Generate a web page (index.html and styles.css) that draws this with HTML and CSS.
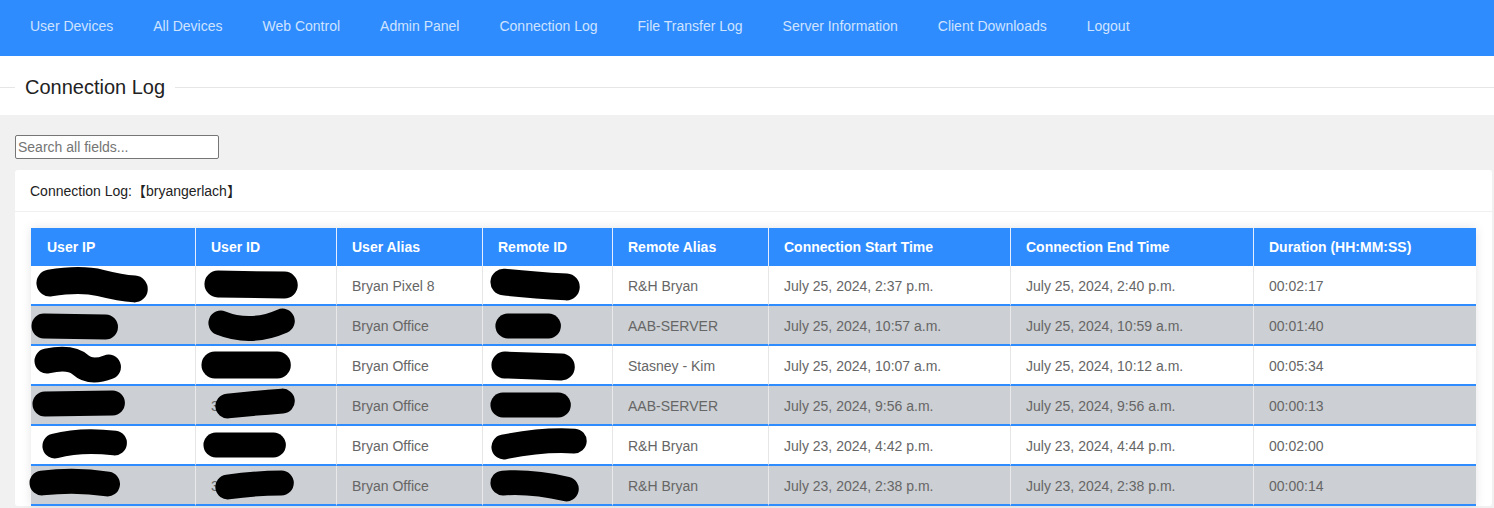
FILE: index.html
```html
<!DOCTYPE html>
<html lang="en">
<head>
<meta charset="utf-8">
<title>Connection Log</title>
<link rel="stylesheet" href="styles.css">
</head>
<body>
<nav class="topnav">
  <a href="#">User Devices</a>
  <a href="#">All Devices</a>
  <a href="#">Web Control</a>
  <a href="#">Admin Panel</a>
  <a href="#">Connection Log</a>
  <a href="#">File Transfer Log</a>
  <a href="#">Server Information</a>
  <a href="#">Client Downloads</a>
  <a href="#">Logout</a>
</nav>
<header class="page-title">
  <span class="rule rule-start"></span>
  <h1>Connection Log</h1>
  <span class="rule rule-fill"></span>
</header>
<main class="content">
  <input class="search" type="text" placeholder="Search all fields...">
  <section class="card">
    <div class="card-header">Connection Log:【bryangerlach】</div>
    <div class="card-body">
      <table class="log">
        <colgroup>
          <col class="c-ip"><col class="c-uid"><col class="c-ualias"><col class="c-rid"><col class="c-ralias"><col class="c-start"><col class="c-end"><col class="c-dur">
        </colgroup>
        <thead>
          <tr><th>User IP</th><th>User ID</th><th>User Alias</th><th>Remote ID</th><th>Remote Alias</th><th>Connection Start Time</th><th>Connection End Time</th><th>Duration (HH:MM:SS)</th></tr>
        </thead>
        <tbody>
          <tr>
            <td class="red"><svg class="blot" viewBox="0 0 165 40"><path d="M19 17 Q50 12 70 17 T104 23"/></svg></td>
            <td class="red"><svg class="blot" viewBox="0 0 141 40"><path d="M22 18 L89 19"/></svg></td>
            <td>Bryan Pixel 8</td>
            <td class="red"><svg class="blot" viewBox="0 0 130 40"><path d="M21 16 Q50 19 84 21"/></svg></td>
            <td>R&amp;H Bryan</td><td>July 25, 2024, 2:37 p.m.</td><td>July 25, 2024, 2:40 p.m.</td><td>00:02:17</td>
          </tr>
          <tr>
            <td class="red"><svg class="blot thin" viewBox="0 0 165 40"><path d="M13 20 L75 21"/></svg></td>
            <td class="red"><svg class="blot thin" viewBox="0 0 141 40"><path d="M25 17 Q55 29 87 15"/></svg></td>
            <td>Bryan Office</td>
            <td class="red"><svg class="blot thin" viewBox="0 0 130 40"><path d="M25 20 L66 20"/></svg></td>
            <td>AAB-SERVER</td><td>July 25, 2024, 10:57 a.m.</td><td>July 25, 2024, 10:59 a.m.</td><td>00:01:40</td>
          </tr>
          <tr>
            <td class="red"><svg class="blot thin" viewBox="0 0 165 40"><path d="M16 15 Q40 10 50 19 T78 21"/></svg></td>
            <td class="red"><svg class="blot" viewBox="0 0 141 40"><path d="M19 19 L82 19"/></svg></td>
            <td>Bryan Office</td>
            <td class="red"><svg class="blot" viewBox="0 0 130 40"><path d="M22 19 L79 21"/></svg></td>
            <td>Stasney - Kim</td><td>July 25, 2024, 10:07 a.m.</td><td>July 25, 2024, 10:12 a.m.</td><td>00:05:34</td>
          </tr>
          <tr>
            <td class="red"><svg class="blot thin" viewBox="0 0 165 40"><path d="M14 18 L82 17"/></svg></td>
            <td class="red">3<svg class="blot thin" viewBox="0 0 141 40"><path d="M32 20 Q60 17 87 15"/></svg></td>
            <td>Bryan Office</td>
            <td class="red"><svg class="blot thin" viewBox="0 0 130 40"><path d="M20 19 L76 19"/></svg></td>
            <td>AAB-SERVER</td><td>July 25, 2024, 9:56 a.m.</td><td>July 25, 2024, 9:56 a.m.</td><td>00:00:13</td>
          </tr>
          <tr>
            <td class="red"><svg class="blot thin" viewBox="0 0 165 40"><path d="M24 20 Q50 13 84 17"/></svg></td>
            <td class="red"><svg class="blot thin" viewBox="0 0 141 40"><path d="M20 19 L78 19"/></svg></td>
            <td>Bryan Office</td>
            <td class="red"><svg class="blot thin" viewBox="0 0 130 40"><path d="M21 21 Q60 13 92 15"/></svg></td>
            <td>R&amp;H Bryan</td><td>July 23, 2024, 4:42 p.m.</td><td>July 23, 2024, 4:44 p.m.</td><td>00:02:00</td>
          </tr>
          <tr>
            <td class="red"><svg class="blot thin" viewBox="0 0 165 40"><path d="M11 17 Q45 13 77 18"/></svg></td>
            <td class="red">3<svg class="blot thin" viewBox="0 0 141 40"><path d="M32 21 Q60 17 86 17"/></svg></td>
            <td>Bryan Office</td>
            <td class="red"><svg class="blot thin" viewBox="0 0 130 40"><path d="M20 17 Q50 15 84 23"/></svg></td>
            <td>R&amp;H Bryan</td><td>July 23, 2024, 2:38 p.m.</td><td>July 23, 2024, 2:38 p.m.</td><td>00:00:14</td>
          </tr>
        </tbody>
      </table>
    </div>
  </section>
</main>
</body>
</html>
```
FILE: styles.css
```css
* { box-sizing: border-box; }

html, body {
  margin: 0;
  padding: 0;
  background: #f1f1f1;
  font-family: "Liberation Sans", Arial, "Noto Sans CJK SC", sans-serif;
  font-size: 14px;
  overflow: hidden;
}

.topnav {
  height: 56px;
  background: #2e8cff;
  display: flex;
  align-items: center;
  padding-left: 10px;
}

.topnav a {
  color: #cfe3ff;
  text-decoration: none;
  font-size: 14px;
  padding: 0 20px;
  line-height: 16px;
  position: relative;
  top: -2px;
}

.page-title {
  height: 59px;
  background: #fff;
  display: flex;
  align-items: center;
  padding-top: 3px;
}

.page-title h1 {
  margin: 0;
  padding: 0 10px;
  font-size: 20px;
  font-weight: normal;
  color: #222;
  line-height: 24px;
}

.rule {
  height: 1px;
  background: #e6e6e6;
  margin-top: 0;
}

.rule-start { width: 15px; }
.rule-fill { flex: 1; }

.content {
  padding: 20px 2px 20px 15px;
}

.search {
  display: block;
  width: 204px;
  height: 24px;
  border: 1px solid #767676;
  border-radius: 2px;
  padding: 1px 2px;
  font-family: inherit;
  font-size: 14px;
  color: #333;
  background: #fff;
  margin: 0 0 11px;
}

.search::placeholder { color: #757575; }

.card {
  background: #fff;
  border-radius: 3px;
}

.card-header {
  padding: 13px 15px 11px;
  line-height: 17px;
  color: #222;
  border-bottom: 1px solid #f0f0f0;
}

.card-body {
  padding: 16px 16px 0;
}

.log {
  table-layout: fixed;
  width: 1445px;
  border-collapse: separate;
  border-spacing: 0;
  box-shadow: 0 0 10px rgba(0, 0, 0, 0.1);
}

.c-ip { width: 165px; }
.c-uid { width: 141px; }
.c-ualias { width: 146px; }
.c-rid { width: 130px; }
.c-ralias { width: 156px; }
.c-start { width: 242px; }
.c-end { width: 243px; }
.c-dur { width: 222px; }

.log th {
  background: #2e8cff;
  color: #fff;
  font-weight: bold;
  text-align: left;
  height: 38px;
  padding: 0 15px;
  border-right: 1px solid #e4eefc;
  white-space: nowrap;
}

.log th:first-child { padding-left: 16px; }
.log th:last-child { border-right: none; }

.log td {
  height: 40px;
  padding: 2px 15px 0;
  color: #666;
  border-right: 1px solid #e6e6e6;
  border-bottom: 2px solid #2e8cff;
  white-space: nowrap;
}

.log td:first-child { padding-left: 16px; }
.log td:last-child { border-right: none; }

.log tbody tr:nth-child(even) td {
  background: #cccfd3;
  border-right-color: #e9e9e9;
}

.log td.red {
  position: relative;
}

.blot {
  position: absolute;
  left: 0;
  top: 0;
  width: 100%;
  height: 40px;
  overflow: visible;
}

.blot path {
  fill: none;
  stroke: #000;
  stroke-width: 27;
  stroke-linecap: round;
  stroke-linejoin: round;
}

.blot.thin path { stroke-width: 25; }
```
